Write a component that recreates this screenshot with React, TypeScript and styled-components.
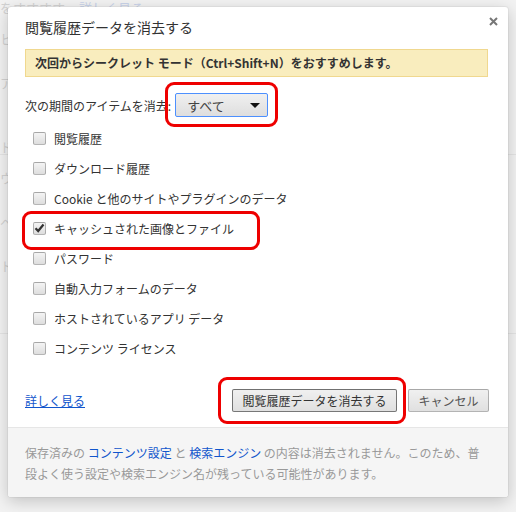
import React from "react";
import styled, { createGlobalStyle } from "styled-components";

const GlobalStyle = createGlobalStyle`
  html, body {
    margin: 0;
    padding: 0;
  }
  body {
    width: 516px;
    height: 512px;
    overflow: hidden;
    background: #f2f2f2;
    font-family: "Noto Sans CJK JP", "Noto Sans", sans-serif;
    color: #333;
  }
`;

const Stage = styled.div`
  position: relative;
  width: 516px;
  height: 512px;
  overflow: hidden;
`;

const BackPage = styled.div`
  display: flex;
  flex-direction: column;
  padding-top: 1px;
  color: #d2d2d2;
  font-size: 13px;
`;

const BackLine = styled.div<{ $gap: number }>`
  margin-top: ${(p) => p.$gap}px;
  line-height: 14px;
  white-space: nowrap;
  border-bottom: ${(p) => (p.$gap > 40 ? "1px solid #e4e4e4" : "none")};
`;

const BackLink = styled.span`
  color: #c9d3ea;
  margin-left: 14px;
`;

const Dialog = styled.div`
  position: absolute;
  left: 8px;
  top: 7px;
  width: 500px;
  height: 490px;
  background: #fff;
  border-radius: 3px;
  box-shadow: 0 4px 16px rgba(0, 0, 0, 0.2), 0 0 0 1px rgba(0, 0, 0, 0.04);
  display: flex;
  flex-direction: column;
`;

const Body = styled.div`
  flex: 1;
  display: flex;
  flex-direction: column;
  padding: 13px 20px 0 17px;
`;

const Header = styled.div`
  display: flex;
  align-items: center;
  justify-content: space-between;
  height: 14px;
`;

const Title = styled.h1`
  margin: 0;
  font-size: 14px;
  font-weight: normal;
  line-height: 14px;
  color: #333;
`;

const CloseButton = styled.button`
  border: none;
  background: none;
  padding: 0;
  margin-right: -10px;
  margin-top: -12px;
  width: 10px;
  height: 10px;
  display: flex;
  align-items: center;
  justify-content: center;
  cursor: pointer;
`;

const Notice = styled.div`
  margin-top: 15px;
  height: 26px;
  line-height: 26px;
  padding-left: 9px;
  background: #f9edbe;
  border: 1px solid #f0d88f;
  font-size: 12px;
  font-weight: bold;
  color: #333;
  white-space: nowrap;
`;

const PeriodRow = styled.div`
  display: flex;
  align-items: center;
  margin-top: 16px;
  font-size: 12px;
  color: #333;
`;

const PeriodLabel = styled.span`
  margin-right: 4px;
`;

const Marked = styled.div`
  position: relative;
  display: flex;
`;

const Highlight = styled.span<{ $t: number; $l: number; $b: number; $r?: number; $w?: number }>`
  position: absolute;
  top: ${(p) => p.$t}px;
  left: ${(p) => p.$l}px;
  bottom: ${(p) => p.$b}px;
  ${(p) => (p.$w !== undefined ? `width: ${p.$w}px;` : `right: ${p.$r}px;`)}
  box-sizing: border-box;
  border: 3px solid #ee0000;
  border-radius: 9px;
  pointer-events: none;
`;

const Select = styled.div`
  width: 93px;
  height: 24px;
  box-sizing: border-box;
  border: 1px solid #4d90fe;
  border-radius: 2px;
  background: linear-gradient(#f0f0f0, #dedede);
  display: flex;
  align-items: center;
  justify-content: space-between;
  padding: 0 7px 0 11px;
  font-size: 13px;
  color: #444;
`;

const List = styled.div`
  display: flex;
  flex-direction: column;
  margin-top: 6px;
`;

const Row = styled.label`
  display: flex;
  align-items: center;
  height: 30px;
  padding-left: 8px;
  gap: 8px;
  font-size: 12px;
  color: #333;
`;

const Box = styled.span`
  width: 13px;
  height: 13px;
  box-sizing: border-box;
  border: 1px solid rgba(0, 0, 0, 0.25);
  border-radius: 2px;
  background: linear-gradient(#f4f4f4, #dedede);
  display: flex;
  align-items: center;
  justify-content: center;
`;

const Actions = styled.div`
  display: flex;
  align-items: center;
  margin-top: 26px;
`;

const MoreLink = styled.a`
  font-size: 12px;
  color: #15c;
  text-decoration: underline;
  margin-right: auto;
`;

const Button = styled.button<{ $primary?: boolean }>`
  height: 23px;
  box-sizing: border-box;
  padding: 0;
  width: ${(p) => (p.$primary ? 165 : 81)}px;
  border: 1px solid ${(p) => (p.$primary ? "rgba(0,0,0,0.5)" : "rgba(0,0,0,0.25)")};
  border-radius: 2px;
  background: linear-gradient(#f0f0f0, #e0e0e0);
  font-family: inherit;
  font-size: 12px;
  color: ${(p) => (p.$primary ? "#333" : "#555")};
  line-height: 21px;
`;

const ButtonGroup = styled.div`
  display: flex;
  gap: 11px;
  margin-right: -1px;
`;

const Footer = styled.div`
  height: 70px;
  box-sizing: border-box;
  margin-top: 15px;
  border-top: 1px solid #e6e6e6;
  background: #f5f5f5;
  padding: 14px 20px 0 17px;
  font-size: 12px;
  line-height: 21px;
  color: #999;
  border-radius: 0 0 3px 3px;
`;

const FooterLink = styled.a`
  color: #15c;
  text-decoration: none;
`;

const items = [
  { label: "閲覧履歴", checked: false },
  { label: "ダウンロード履歴", checked: false },
  { label: "Cookie と他のサイトやプラグインのデータ", checked: false },
  { label: "キャッシュされた画像とファイル", checked: true },
  { label: "パスワード", checked: false },
  { label: "自動入力フォームのデータ", checked: false },
  { label: "ホストされているアプリ データ", checked: false },
  { label: "コンテンツ ライセンス", checked: false },
];

const backLines = [
  { gap: 0, text: "をすすすす", link: "詳しく見る" },
  { gap: 17, text: "ヒ" },
  { gap: 30, text: "ア" },
  { gap: 50, text: "ド" },
  { gap: 16, text: "ウ" },
  { gap: 30, text: "ペ" },
  { gap: 30, text: "ト" },
  { gap: 60, text: "" },
];

const Check = () => (
  <svg width="11" height="10" viewBox="0 0 11 10">
    <path d="M1.5 5.2 L4.2 8 L9.5 1.5" fill="none" stroke="#333" strokeWidth="2.2" />
  </svg>
);

export default function App() {
  return (
    <Stage>
      <GlobalStyle />
      <BackPage>
        {backLines.map((l, i) => (
          <BackLine key={i} $gap={l.gap}>
            {l.text}
            {l.link && <BackLink>{l.link}</BackLink>}
          </BackLine>
        ))}
      </BackPage>
      <Dialog>
        <Body>
          <Header>
            <Title>閲覧履歴データを消去する</Title>
            <CloseButton aria-label="閉じる">
              <svg width="9" height="9" viewBox="0 0 9 9">
                <path d="M1 1 L8 8 M8 1 L1 8" stroke="#777" strokeWidth="2" />
              </svg>
            </CloseButton>
          </Header>
          <Notice>次回からシークレット モード（Ctrl+Shift+N）をおすすめします。</Notice>
          <PeriodRow>
            <PeriodLabel>次の期間のアイテムを消去:</PeriodLabel>
            <Marked>
              <Select>
                <span>すべて</span>
                <svg width="10" height="5" viewBox="0 0 10 5">
                  <path d="M0 0 L10 0 L5 5 Z" fill="#111" />
                </svg>
              </Select>
              <Highlight $t={-11} $l={-10} $r={-10} $b={-10} />
            </Marked>
          </PeriodRow>
          <List>
            {items.map((it) => (
              <Marked key={it.label}>
                <Row>
                  <Box>{it.checked && <Check />}</Box>
                  {it.label}
                </Row>
                {it.checked && <Highlight $t={-2} $l={-3} $w={238} $b={-7} />}
              </Marked>
            ))}
          </List>
          <Actions>
            <MoreLink href="#">詳しく見る</MoreLink>
            <ButtonGroup>
              <Marked>
                <Button $primary>閲覧履歴データを消去する</Button>
                <Highlight $t={-12} $l={-14} $r={-9} $b={-12} />
              </Marked>
              <Button>キャンセル</Button>
            </ButtonGroup>
          </Actions>
        </Body>
        <Footer>
          保存済みの <FooterLink href="#">コンテンツ設定</FooterLink> と{" "}
          <FooterLink href="#">検索エンジン</FooterLink>{" "}
          の内容は消去されません。このため、普段よく使う設定や検索エンジン名が残っている可能性があります。
        </Footer>
      </Dialog>
    </Stage>
  );
}
